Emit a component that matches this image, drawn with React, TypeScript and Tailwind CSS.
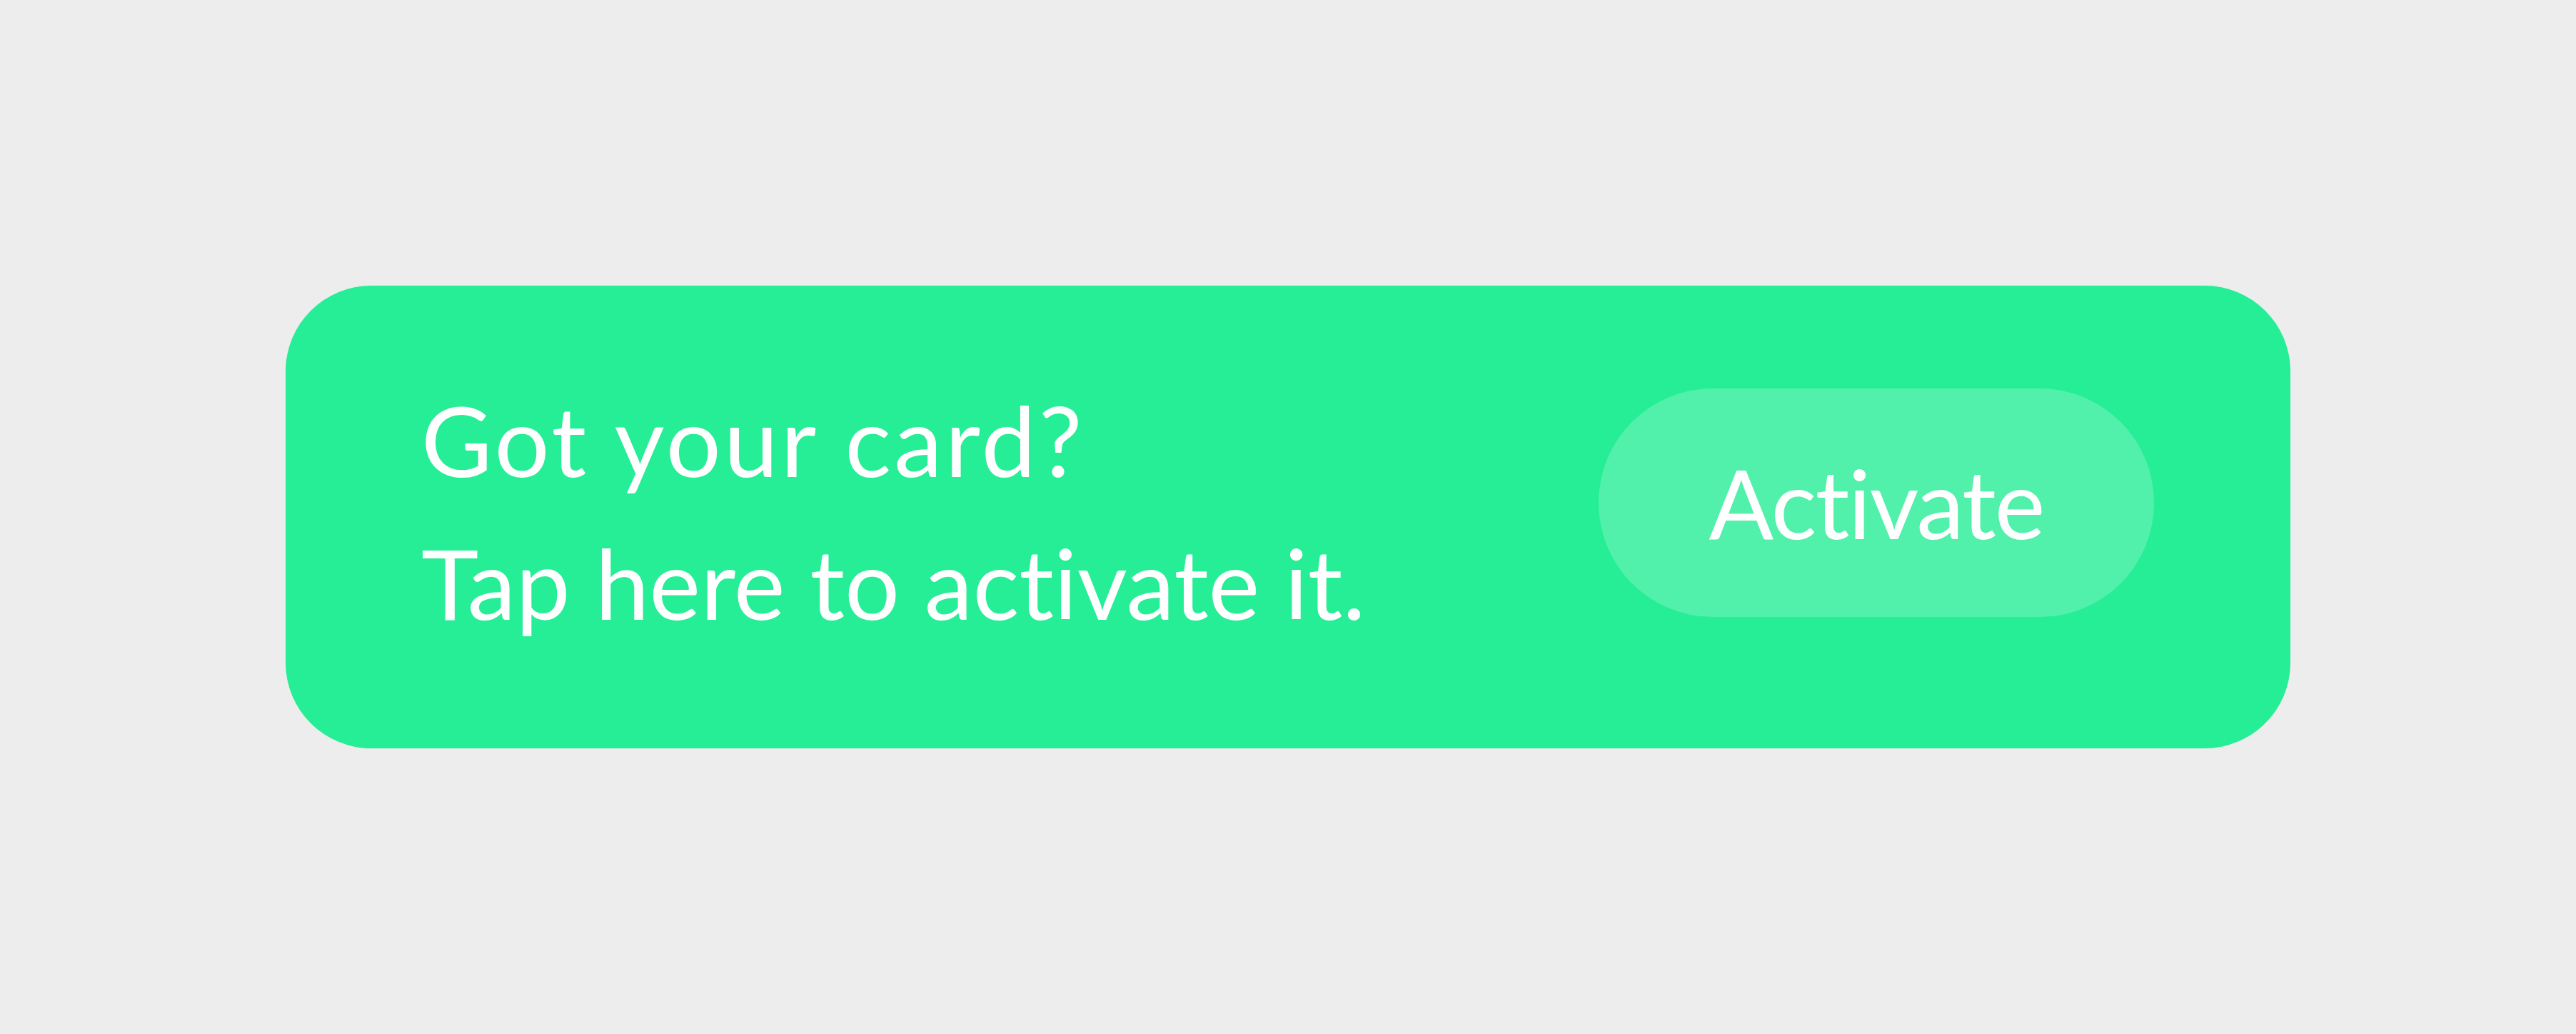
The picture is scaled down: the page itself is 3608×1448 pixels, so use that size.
import React from 'react';

export default function App(): React.ReactElement {
  return (
    <div className="w-full h-[1448px] bg-[#ededed] flex items-center justify-center font-['Lato',_'Liberation_Sans',_sans-serif] [font-variant-ligatures:none]">
      <div className="w-[2808px] h-[648px] rounded-[120px] bg-[#26ee96] flex items-start justify-between pl-[190px] pr-[191px] cursor-pointer">
        {/* Message */}
        <div className="flex flex-col pt-[148px] text-white">
          <div className="text-[136px] leading-[136px] tracking-[4px]">Got your card?</div>
          <div className="text-[136px] leading-[136px] mt-[64px]">Tap here to activate it.</div>
        </div>

        {/* Action */}
        <button
          type="button"
          className="mt-[144px] w-[778px] h-[320px] rounded-full bg-white/20 text-white text-[134px] leading-none tracking-[-2px] flex items-center justify-center"
        >
          Activate
        </button>
      </div>
    </div>
  );
}
